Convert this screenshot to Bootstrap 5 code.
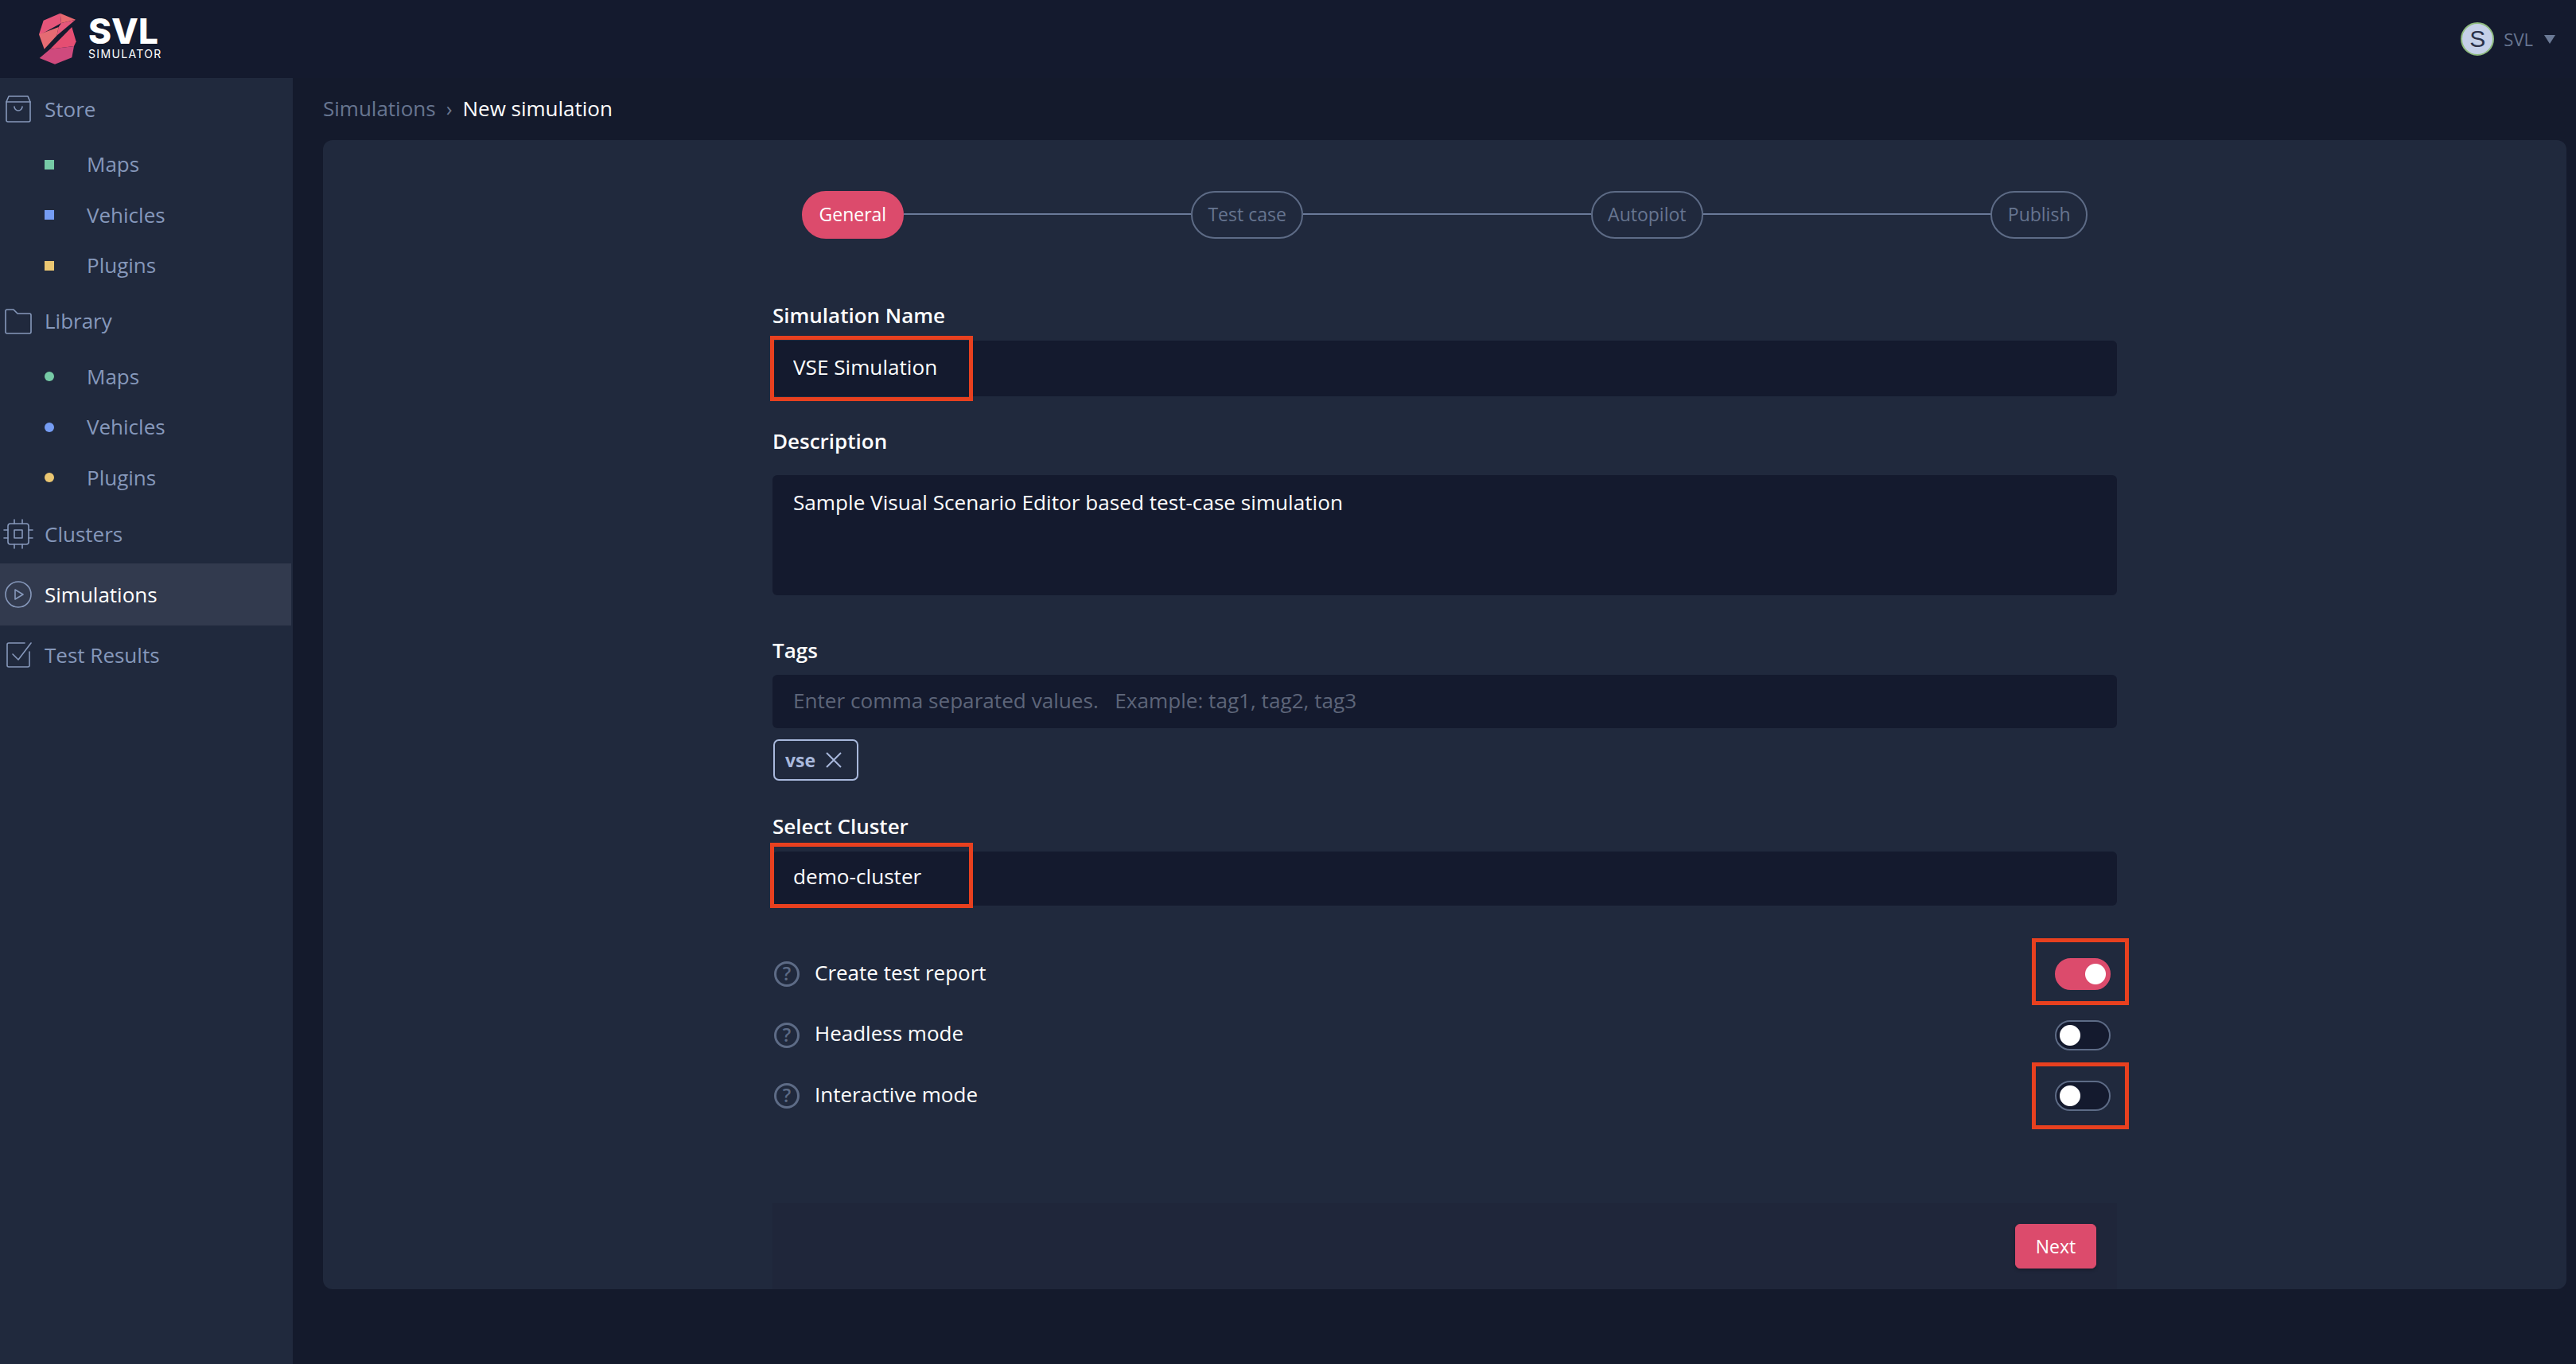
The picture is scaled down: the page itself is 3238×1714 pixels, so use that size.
<!DOCTYPE html>
<html lang="en">
<head>
    <meta charset="UTF-8">
    <title>SVL Simulator - New simulation</title>
    <link href="https://cdn.jsdelivr.net/npm/bootstrap@5.3.0/dist/css/bootstrap.min.css" rel="stylesheet">
    <style>
        body {
            background-color: #141a2c;
            font-family: "Open Sans", sans-serif;
            font-size: 26px;
            color: #fff;
            height: 100vh;
            overflow: hidden;
        }

        /* top bar */
        .top-bar { height: 98px; background-color: #141a2e; padding: 0 26px 0 46px; }
        .logo-link { gap: 11px; }
        .logo-word { font-family: Inter, sans-serif; font-weight: 800; font-size: 44px; line-height: 34px; letter-spacing: 0; }
        .logo-sub { font-family: Inter, sans-serif; font-size: 14px; line-height: 16px; letter-spacing: 1.35px; margin-top: 4px; }
        .user-circle { width: 42px; height: 42px; background-color: #c5d0e8; border: 2px solid #8fbb7f; color: #2a3148; font-family: "Liberation Sans", sans-serif; font-size: 30px; line-height: 1; }
        .user-name { color: #677590; font-size: 22px; margin-left: 12px; }
        .user-caret { width: 0; height: 0; border-left: 7px solid transparent; border-right: 7px solid transparent; border-top: 11px solid #6b7a96; margin-left: 14px; }

        /* sidebar */
        .side-bar { width: 368px; background-color: #20293d; padding-top: 1px; flex-shrink: 0; }
        .side-item { height: 76px; padding-left: 3px; gap: 13px; color: #8698bb; }
        .side-item.is-active { height: 78px; margin: -1px 2px -1px 0; background-color: #323a4e; color: #fff; }
        .side-item.after-subs { margin-top: 1px; }
        .side-item svg { width: 40px; height: 40px; fill: none; stroke: #8698bb; stroke-width: 1.6; stroke-linecap: round; stroke-linejoin: round; }
        .side-sub { height: 63.5px; padding-left: 56px; gap: 41px; color: #8698bb; }
        .side-dot { width: 12px; height: 12px; }
        .dot-green { background-color: #76caa6; }
        .dot-blue { background-color: #759cf3; }
        .dot-yellow { background-color: #eac672; }

        /* content */
        .main-area { padding: 18px 12px 0 38px; }
        .crumbs { --bs-breadcrumb-divider: '›'; --bs-breadcrumb-margin-bottom: 20px; --bs-breadcrumb-divider-color: #6b7890; --bs-breadcrumb-item-padding-x: 13px; --bs-breadcrumb-item-active-color: #fff; line-height: 40px; }
        .crumbs .breadcrumb-item:first-child { color: #677590; }
        .panel { height: 1444px; background-color: #20293d; border-radius: 12px; }
        .form-wrap { width: 1690px; }

        /* stepper */
        .stepper { padding: 64px 37px 83px; }
        .step-pill { height: 60px; padding: 0 19.5px 2px; border: 2px solid #5d6b86; border-radius: 30px; color: #677590; font-size: 23px; }
        .step-pill.is-current { background-color: #dc4b6c; border-color: #dc4b6c; color: #fff; }
        .step-line { height: 2px; background-color: #6a7a99; margin-top: -2px; }

        /* fields */
        .field-label { display: block; font-weight: 600; line-height: 26px; margin-bottom: 19px; }
        .label-desc { margin-top: 43px; margin-bottom: 30px; }
        .label-tags { margin-top: 56px; margin-bottom: 18px; }
        .label-cluster { margin-top: 44px; margin-bottom: 19px; }
        .field-input.form-control, .field-input.form-select {
            background-color: #141a2e;
            background-image: none;
            border: 0;
            border-radius: 6px;
            color: #fff;
            font-size: 26.15px;
            height: 70px;
            padding: 0 26px 4px;
        }
        .field-input::placeholder { color: #5d6579; opacity: 1; }
        textarea.field-input.form-control { height: 151px; padding-top: 15px; resize: none; }
        .input-tags.field-input.form-control { height: 67px; }
        .label-cluster + .position-relative .field-input.form-select { height: 68px; }
        .chip-row { margin-top: 14px; }
        .tag-chip { height: 52px; width: 107px; margin-left: 1px; border: 2px solid #a8b8dc; border-radius: 7px; color: #a8b8dc; font-size: 23px; font-weight: 700; padding-left: 13px; gap: 13px; }
        .red-box { position: absolute; border: 5px solid #e8401f; pointer-events: none; }
        .box-input { left: -3px; top: -6px; width: 255px; height: 82px; }
        .box-input.box-cluster { top: -11px; }
        .box-switch { left: -29px; top: -25px; width: 122px; height: 84px; }
        .box-switch.box-lower { top: -23px; }

        /* option rows */
        .option-list { margin-top: 67px; gap: 38.5px; }
        .option-row { height: 38px; }
        .option-label { padding-bottom: 4px; }
        .option-help { width: 32px; height: 32px; fill: none; stroke: #5d6b86; stroke-width: 3; margin: 0 19px 0 2px; }
        .option-help text { fill: #5d6b86; stroke: none; font-size: 23px; font-weight: 600; }
        .option-switch { position: relative; width: 70px; margin: 0 8px 0 0; }
        .form-switch .switch-input {
            width: 70px;
            height: 38px;
            margin: 0;
            float: none;
            display: block;
            background-color: #141a2e;
            border: 2px solid #5d6b86;
            background-image: radial-gradient(circle at 17px 50%, #fff 12.5px, transparent 13.5px);
        }
        .form-switch .switch-input:checked {
            height: 40px;
            background-color: #dc4b6c;
            border-color: #dc4b6c;
            background-image: radial-gradient(circle at 49px 50%, #fff 12.5px, transparent 13.5px);
        }

        /* footer */
        .panel-foot { height: 108px; background-color: #1f263a; padding-right: 26px; }
        .btn-next { --bs-btn-bg: #dc4b6c; --bs-btn-border-color: #dc4b6c; --bs-btn-color: #fff; --bs-btn-hover-bg: #c9405f; --bs-btn-hover-border-color: #c9405f; --bs-btn-hover-color: #fff; width: 102px; height: 56px; font-size: 23px; padding: 0; border-radius: 6px; box-shadow: 0 2px 4px rgba(0, 0, 0, .25); }
    </style>
</head>
<body class="d-flex flex-column">

    <!-- top bar -->
    <nav class="top-bar d-flex align-items-center justify-content-between flex-shrink-0">
        <a href="#" class="logo-link d-flex align-items-center text-white text-decoration-none">
            <svg width="54" height="70" viewBox="140 40 160 210" aria-hidden="true">
                <polygon points="165,75 228,48 232,85 155,128 148,128" fill="#e5557a"/>
                <polygon points="228,48 286,72 232,85" fill="#e8696f"/>
                <polygon points="232,85 286,72 215,132 222,100" fill="#e4577a"/>
                <polygon points="148,128 222,100 215,132 168,183" fill="#e56b73"/>
                <polygon points="272,100 288,155 280,172 190,183" fill="#e54e72"/>
                <polygon points="190,183 280,172 272,215 208,240 150,217" fill="#cf4a7d"/>
            </svg>
            <div>
                <div class="logo-word">SVL</div>
                <div class="logo-sub">SIMULATOR</div>
            </div>
        </a>
        <div class="d-flex align-items-center">
            <span class="user-circle rounded-circle d-flex align-items-center justify-content-center">S</span>
            <span class="user-name">SVL</span>
            <span class="user-caret"></span>
        </div>
    </nav>

    <div class="d-flex flex-grow-1">
        <!-- sidebar -->
        <aside class="side-bar">
            <div class="side-item d-flex align-items-center">
                <svg viewBox="0 0 40 40"><path d="M8 4h24l3 7v23a2 2 0 0 1-2 2H7a2 2 0 0 1-2-2V11z"/><path d="M5 11h30"/><path d="M15 17a5 5 0 0 0 10 0"/></svg>
                <span>Store</span>
            </div>
            <div class="side-sub d-flex align-items-center"><span class="side-dot dot-green"></span><span>Maps</span></div>
            <div class="side-sub d-flex align-items-center"><span class="side-dot dot-blue"></span><span>Vehicles</span></div>
            <div class="side-sub d-flex align-items-center"><span class="side-dot dot-yellow"></span><span>Plugins</span></div>
            <div class="side-item d-flex align-items-center">
                <svg viewBox="0 0 40 40"><path d="M6 5h8l5 5h15a2 2 0 0 1 2 2v21a2 2 0 0 1-2 2H6a2 2 0 0 1-2-2V7a2 2 0 0 1 2-2z"/></svg>
                <span>Library</span>
            </div>
            <div class="side-sub d-flex align-items-center"><span class="side-dot dot-green rounded-circle"></span><span>Maps</span></div>
            <div class="side-sub d-flex align-items-center"><span class="side-dot dot-blue rounded-circle"></span><span>Vehicles</span></div>
            <div class="side-sub d-flex align-items-center"><span class="side-dot dot-yellow rounded-circle"></span><span>Plugins</span></div>
            <div class="side-item after-subs d-flex align-items-center">
                <svg viewBox="0 0 40 40"><rect x="7" y="7" width="26" height="26" rx="3"/><rect x="15" y="15" width="10" height="10"/><path d="M15 2v5M25 2v5M15 33v5M25 33v5M2 15h5M2 25h5M33 15h5M33 25h5"/></svg>
                <span>Clusters</span>
            </div>
            <div class="side-item is-active d-flex align-items-center">
                <svg viewBox="0 0 40 40"><circle cx="20" cy="20" r="16"/><path d="M16 14l10 6-10 6z"/></svg>
                <span>Simulations</span>
            </div>
            <div class="side-item d-flex align-items-center">
                <svg viewBox="0 0 40 40"><path d="M28 5H8a2 2 0 0 0-2 2v26a2 2 0 0 0 2 2h24a2 2 0 0 0 2-2V16"/><path d="M13 19l7 7L36 5"/></svg>
                <span>Test Results</span>
            </div>
        </aside>

        <!-- content -->
        <main class="main-area flex-grow-1">
            <ol class="breadcrumb crumbs">
                <li class="breadcrumb-item">Simulations</li>
                <li class="breadcrumb-item active">New simulation</li>
            </ol>

            <div class="panel d-flex flex-column align-items-center">
                <div class="form-wrap d-flex flex-column flex-grow-1">

                    <!-- stepper -->
                    <div class="stepper d-flex align-items-center">
                        <span class="step-pill is-current d-flex align-items-center">General</span>
                        <span class="step-line flex-grow-1"></span>
                        <span class="step-pill d-flex align-items-center">Test case</span>
                        <span class="step-line flex-grow-1"></span>
                        <span class="step-pill d-flex align-items-center">Autopilot</span>
                        <span class="step-line flex-grow-1"></span>
                        <span class="step-pill d-flex align-items-center">Publish</span>
                    </div>

                    <!-- general form -->
                    <label class="field-label" for="simName">Simulation Name</label>
                    <div class="position-relative">
                        <input id="simName" class="form-control field-input" type="text" value="VSE Simulation">
                        <span class="red-box box-input"></span>
                    </div>

                    <label class="field-label label-desc" for="simDesc">Description</label>
                    <textarea id="simDesc" class="form-control field-input">Sample Visual Scenario Editor based test-case simulation</textarea>

                    <label class="field-label label-tags" for="simTags">Tags</label>
                    <input id="simTags" class="form-control field-input input-tags" type="text" placeholder="Enter comma separated values.   Example: tag1, tag2, tag3">
                    <div class="chip-row d-flex">
                        <span class="tag-chip d-flex align-items-center">vse
                            <svg width="20" height="20" viewBox="0 0 20 20" fill="none" stroke="#a8b8dc" stroke-width="2"><path d="M1 1l18 18M19 1L1 19"/></svg>
                        </span>
                    </div>

                    <label class="field-label label-cluster" for="simCluster">Select Cluster</label>
                    <div class="position-relative">
                        <select id="simCluster" class="form-select field-input"><option>demo-cluster</option></select>
                        <span class="red-box box-input box-cluster"></span>
                    </div>

                    <!-- options -->
                    <div class="option-list d-flex flex-column">
                        <div class="option-row d-flex align-items-center justify-content-between">
                            <div class="d-flex align-items-center">
                                <svg class="option-help" viewBox="0 0 32 32"><circle cx="16" cy="16" r="14.5"/><text x="16" y="24" text-anchor="middle">?</text></svg>
                                <span class="option-label">Create test report</span>
                            </div>
                            <div class="form-check form-switch option-switch p-0">
                                <input class="form-check-input switch-input" type="checkbox" role="switch" checked>
                                <span class="red-box box-switch"></span>
                            </div>
                        </div>
                        <div class="option-row d-flex align-items-center justify-content-between">
                            <div class="d-flex align-items-center">
                                <svg class="option-help" viewBox="0 0 32 32"><circle cx="16" cy="16" r="14.5"/><text x="16" y="24" text-anchor="middle">?</text></svg>
                                <span class="option-label">Headless mode</span>
                            </div>
                            <div class="form-check form-switch option-switch p-0">
                                <input class="form-check-input switch-input" type="checkbox" role="switch">
                            </div>
                        </div>
                        <div class="option-row d-flex align-items-center justify-content-between">
                            <div class="d-flex align-items-center">
                                <svg class="option-help" viewBox="0 0 32 32"><circle cx="16" cy="16" r="14.5"/><text x="16" y="24" text-anchor="middle">?</text></svg>
                                <span class="option-label">Interactive mode</span>
                            </div>
                            <div class="form-check form-switch option-switch p-0">
                                <input class="form-check-input switch-input" type="checkbox" role="switch">
                                <span class="red-box box-switch box-lower"></span>
                            </div>
                        </div>
                    </div>

                    <!-- footer -->
                    <div class="panel-foot d-flex align-items-center justify-content-end mt-auto">
                        <button type="button" class="btn btn-next">Next</button>
                    </div>
                </div>
            </div>
        </main>
    </div>

    <script src="https://cdn.jsdelivr.net/npm/bootstrap@5.3.0/dist/js/bootstrap.bundle.min.js"></script>
</body>
</html>
